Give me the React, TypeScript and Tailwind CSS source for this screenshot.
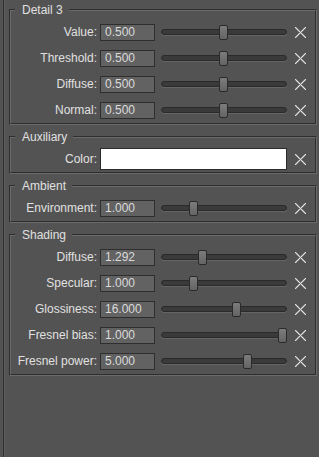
import React from "react";

const font = { fontFamily: '"Liberation Sans", Arial, sans-serif' };

const crossPixels: { x: number; y: number; light: boolean }[] = [];
for (let y = 0; y < 11; y++) {
    for (let x = 0; x < 11; x++) {
        if (Math.abs(x - y) <= 1 || Math.abs(x + y - 10) <= 1) {
            crossPixels.push({ x, y, light: (x + y) % 2 === 0 });
        }
    }
}

function ResetIcon() {
    return (
        <svg width="11" height="11" viewBox="0 0 11 11" shapeRendering="crispEdges">
            {crossPixels.map((p) => (
                <rect key={`${p.x}-${p.y}`} x={p.x} y={p.y} width="1" height="1" fill={p.light ? "#e2e2e2" : "#858585"} />
            ))}
        </svg>
    );
}

function Slider({ pos }: { pos: number }) {
    return (
        <div className="relative ml-[6px] w-[126px] h-[15px] flex items-center">
            <div className="w-full h-[6px] rounded-full bg-[#3a3a3a] border border-[#2a2a2a] shadow-[0_1px_0_#656565]" />
            <div
                className="absolute top-0 w-[9px] h-[15px] rounded-[2px] border border-[#2a2a2a] bg-gradient-to-b from-[#7c7c7c] to-[#646464]"
                style={{ left: Math.round(pos * 117) }}
            />
        </div>
    );
}

function Reset() {
    return (
        <div className="w-[26px] flex justify-center">
            <ResetIcon />
        </div>
    );
}

function Row({ label, value, pos }: { label: string; value: string; pos: number }) {
    return (
        <div className="flex h-[22px] items-center">
            <div className="w-[89px] pr-[3px] text-right whitespace-nowrap">{label}</div>
            <div className="w-[55px] h-[17px] bg-[#626262] border border-[#2e2e2e] pl-[4px] leading-[15px] text-[#dadada]">
                {value}
            </div>
            <Slider pos={pos} />
            <Reset />
        </div>
    );
}

function Group({ title, children }: { title: string; children: React.ReactNode }) {
    return (
        <div className="relative border-t border-l border-b border-r border-t-[#2e2e2e] border-l-[#2e2e2e] border-b-[#6a6a6a] border-r-[#6a6a6a]">
            <div className="border border-t-[#6a6a6a] border-l-[#6a6a6a] border-b-[#2e2e2e] border-r-[#2e2e2e] pt-[10px] pb-[2px] flex flex-col gap-[4px]">
                {children}
            </div>
            <span className="absolute left-[5px] top-[-7px] pl-[7px] pr-[6px] bg-[#535353] leading-[14px]">{title}</span>
        </div>
    );
}

export default function App() {
    return (
        <div className="flex h-screen bg-[#535353] text-[12px] text-[#e0e0e0]" style={font}>
            <div className="w-[3px]" />
            <div className="w-[1px] bg-[#2f2f2f]" />
            <div className="w-[1px] bg-[#5e5e5e]" />
            <div className="flex-1 pl-[4px] pr-[2px] pt-[9px] flex flex-col gap-[11px]">
                <Group title="Detail 3">
                    <Row label="Value:" value="0.500" pos={0.496} />
                    <Row label="Threshold:" value="0.500" pos={0.496} />
                    <Row label="Diffuse:" value="0.500" pos={0.496} />
                    <Row label="Normal:" value="0.500" pos={0.496} />
                </Group>
                <Group title="Auxiliary">
                    <div className="flex h-[22px] items-center">
                        <div className="w-[89px] pr-[3px] text-right">Color:</div>
                        <div className="w-[187px] h-[22px] bg-white border border-[#2b2b2b]" />
                        <Reset />
                    </div>
                </Group>
                <Group title="Ambient">
                    <Row label="Environment:" value="1.000" pos={0.239} />
                </Group>
                <Group title="Shading">
                    <Row label="Diffuse:" value="1.292" pos={0.316} />
                    <Row label="Specular:" value="1.000" pos={0.239} />
                    <Row label="Glossiness:" value="16.000" pos={0.607} />
                    <Row label="Fresnel bias:" value="1.000" pos={1} />
                    <Row label="Fresnel power:" value="5.000" pos={0.7} />
                </Group>
            </div>
        </div>
    );
}
